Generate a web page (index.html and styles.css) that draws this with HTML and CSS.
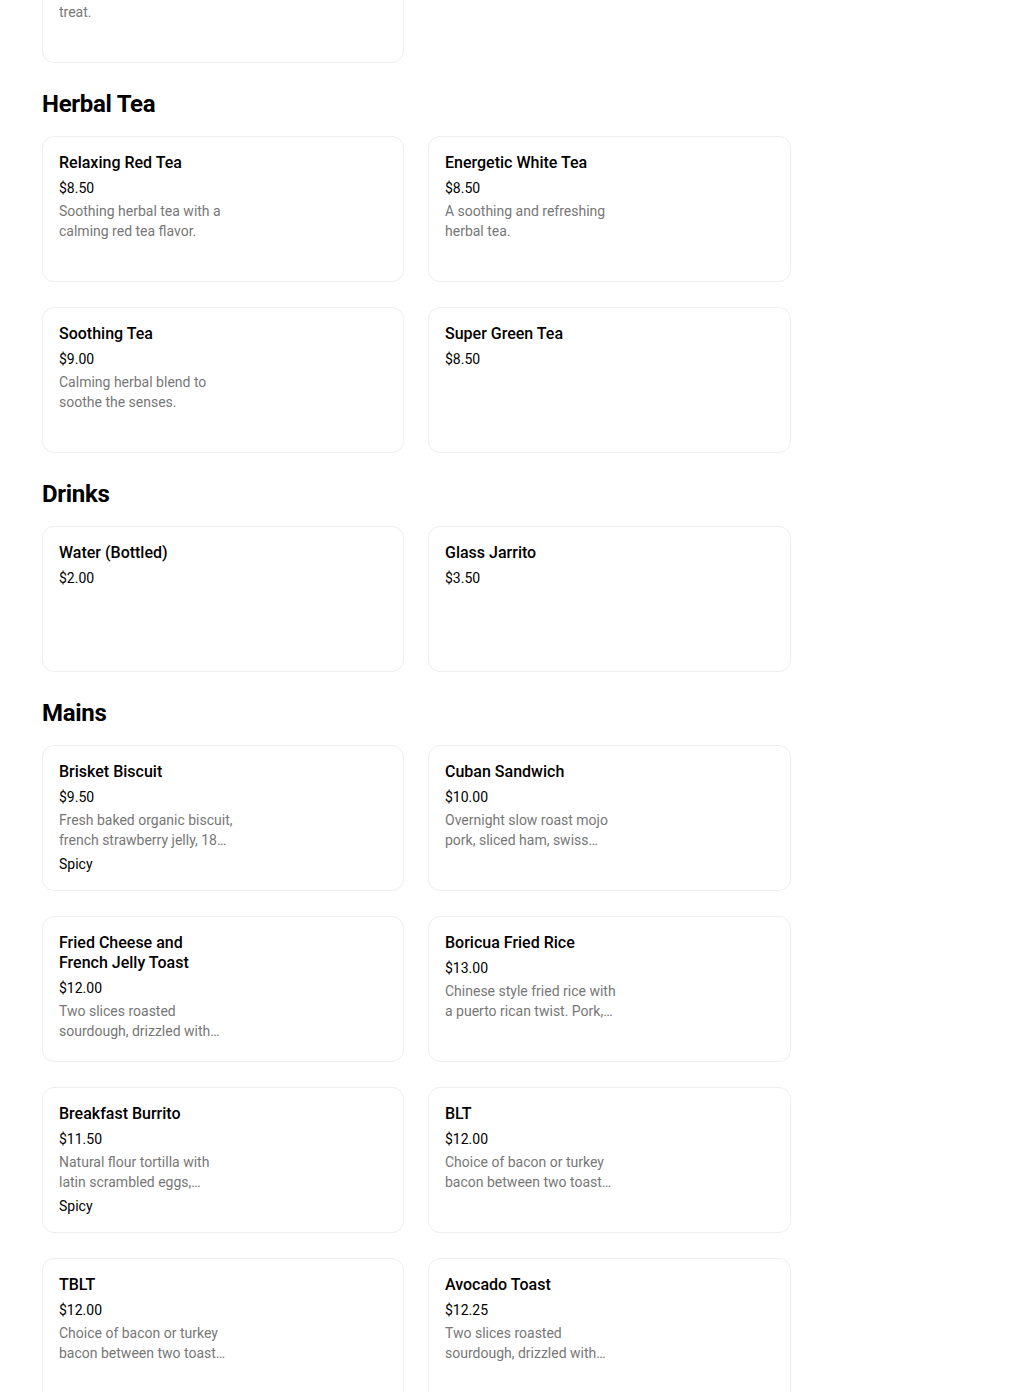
FILE: index.html
```html
<!DOCTYPE html>
<html lang="en">
<head>
  <meta charset="UTF-8" />
  <meta name="viewport" content="width=device-width, initial-scale=1.0" />
  <title>Menu</title>
  <link rel="stylesheet" href="styles.css">
</head>
<body>
  <main class="menu">
    <section class="category category-first">
      <div class="items">
        <div class="item">
          <h3 class="item-name">Morning Pastry</h3>
          <p class="item-price">$4.50</p>
          <p class="item-desc">A warm and flaky morning treat.</p>
        </div>
      </div>
    </section>

    <section class="category">
      <h2>Herbal Tea</h2>
      <div class="items">
        <div class="item">
          <h3 class="item-name">Relaxing Red Tea</h3>
          <p class="item-price">$8.50</p>
          <p class="item-desc">Soothing herbal tea with a calming red tea flavor.</p>
        </div>
        <div class="item">
          <h3 class="item-name">Energetic White Tea</h3>
          <p class="item-price">$8.50</p>
          <p class="item-desc">A soothing and refreshing herbal tea.</p>
        </div>
        <div class="item">
          <h3 class="item-name">Soothing Tea</h3>
          <p class="item-price">$9.00</p>
          <p class="item-desc">Calming herbal blend to soothe the senses.</p>
        </div>
        <div class="item">
          <h3 class="item-name">Super Green Tea</h3>
          <p class="item-price">$8.50</p>
        </div>
      </div>
    </section>

    <section class="category">
      <h2>Drinks</h2>
      <div class="items">
        <div class="item">
          <h3 class="item-name">Water (Bottled)</h3>
          <p class="item-price">$2.00</p>
        </div>
        <div class="item">
          <h3 class="item-name">Glass Jarrito</h3>
          <p class="item-price">$3.50</p>
        </div>
      </div>
    </section>

    <section class="category">
      <h2>Mains</h2>
      <div class="items">
        <div class="item">
          <h3 class="item-name">Brisket Biscuit</h3>
          <p class="item-price">$9.50</p>
          <p class="item-desc">Fresh baked organic biscuit, french strawberry jelly, 18 hour smoked brisket, fried egg and cheddar.</p>
          <p class="item-tag">Spicy</p>
        </div>
        <div class="item">
          <h3 class="item-name">Cuban Sandwich</h3>
          <p class="item-price">$10.00</p>
          <p class="item-desc">Overnight slow roast mojo pork, sliced ham, swiss cheese, pickles and mustard on pressed bread.</p>
        </div>
        <div class="item">
          <h3 class="item-name">Fried Cheese and French Jelly Toast</h3>
          <p class="item-price">$12.00</p>
          <p class="item-desc">Two slices roasted sourdough, drizzled with honey, fried cheese and french jelly.</p>
        </div>
        <div class="item">
          <h3 class="item-name">Boricua Fried Rice</h3>
          <p class="item-price">$13.00</p>
          <p class="item-desc">Chinese style fried rice with a puerto rican twist. Pork, eggs and sofrito.</p>
        </div>
        <div class="item">
          <h3 class="item-name">Breakfast Burrito</h3>
          <p class="item-price">$11.50</p>
          <p class="item-desc">Natural flour tortilla with latin scrambled eggs, potatoes, cheese and salsa.</p>
          <p class="item-tag">Spicy</p>
        </div>
        <div class="item">
          <h3 class="item-name">BLT</h3>
          <p class="item-price">$12.00</p>
          <p class="item-desc">Choice of bacon or turkey bacon between two toast slices with lettuce and tomato.</p>
        </div>
        <div class="item">
          <h3 class="item-name">TBLT</h3>
          <p class="item-price">$12.00</p>
          <p class="item-desc">Choice of bacon or turkey bacon between two toast slices with turkey, lettuce and tomato.</p>
        </div>
        <div class="item">
          <h3 class="item-name">Avocado Toast</h3>
          <p class="item-price">$12.25</p>
          <p class="item-desc">Two slices roasted sourdough, drizzled with olive oil, smashed avocado and chili flakes.</p>
        </div>
      </div>
    </section>
  </main>
</body>
</html>
```

FILE: styles.css
```css
* {
  box-sizing: border-box;
  margin: 0;
  padding: 0;
}

body {
  font-family: Roboto, "Liberation Sans", sans-serif;
  background: #ffffff;
  color: #000000;
}

.menu {
  width: 749px;
  margin-left: 42px;
}

/* page is shown scrolled, the first card is cut at the top */
.category-first {
  margin-top: -83px;
}

.category {
  margin-bottom: 25px;
}

.category h2 {
  font-size: 24px;
  line-height: 32px;
  font-weight: 700;
  letter-spacing: -0.3px;
  margin-bottom: 16px;
}

.items {
  display: grid;
  grid-template-columns: 362px 363px;
  column-gap: 24px;
  row-gap: 25px;
}

.item {
  height: 146px;
  padding: 16px;
  border: 1px solid #eeeeee;
  border-radius: 12px;
  overflow: hidden;
}

.item-name {
  max-width: 170px;
  font-size: 16px;
  line-height: 20px;
  font-weight: 500;
}

.item-price {
  margin-top: 5px;
  font-size: 14px;
  line-height: 20px;
}

.item-desc {
  max-width: 177px;
  margin-top: 3px;
  font-size: 14px;
  line-height: 20px;
  color: #777777;
  display: -webkit-box;
  -webkit-line-clamp: 2;
  -webkit-box-orient: vertical;
  overflow: hidden;
}

.item-tag {
  margin-top: 4px;
  font-size: 14px;
  line-height: 20px;
}
```
